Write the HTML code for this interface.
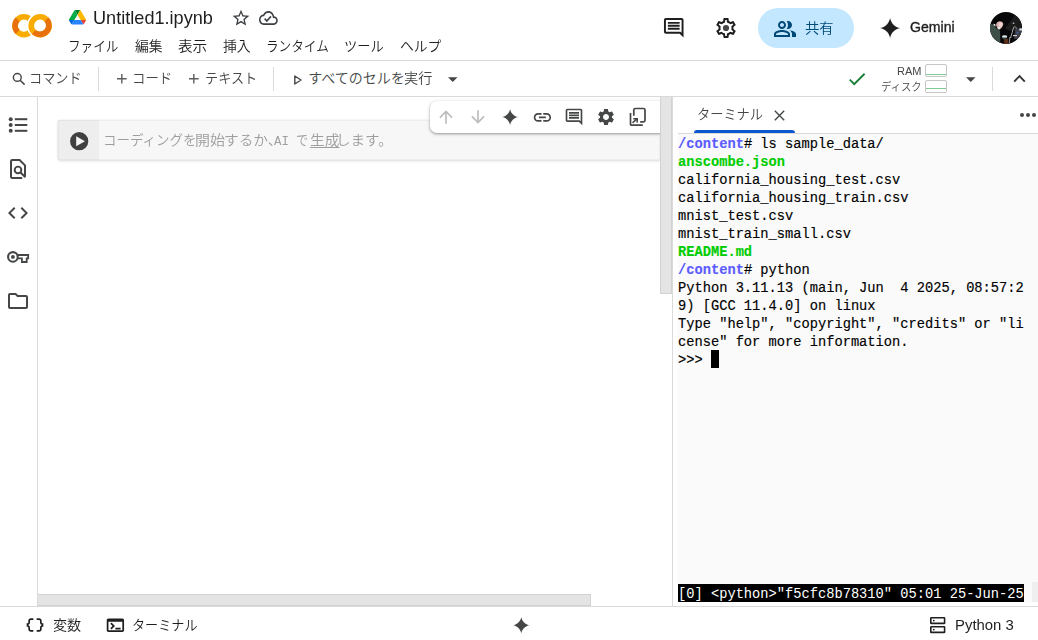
<!DOCTYPE html>
<html lang="ja">
<head>
<meta charset="utf-8">
<title>Untitled1.ipynb - Colab</title>
<style>
*{box-sizing:border-box;margin:0;padding:0}
html,body{width:1038px;height:640px;overflow:hidden;background:#fff}
body{font-family:"Liberation Sans","Noto Sans CJK JP",sans-serif;color:#1f1f1f;position:relative}
.abs{position:absolute}
.t{position:absolute;white-space:nowrap;line-height:1;transform-origin:0 0}
svg{position:absolute;display:block;overflow:visible}
#hdr{left:0;top:0;width:1038px;height:61px;border-bottom:1px solid #dadada;background:#fff}
#tb{left:0;top:61px;width:1038px;height:36px;border-bottom:1px solid #dadada;background:#fff}
.vsep{width:1px;background:#dadada}
#left{left:0;top:97px;width:38px;height:509px;border-right:1px solid #dadada;background:#fff}
#cell{left:58px;top:120px;width:602px;height:40px;background:#f7f7f7;border-radius:2px 0 0 2px;box-shadow:inset 0 0 0 1px rgba(0,0,0,.035),0 1px 3px rgba(0,0,0,.14),0 0 2px rgba(0,0,0,.06)}
#gutter{left:58px;top:120px;width:41px;height:40px;background:#eeeeee;border-radius:2px 0 0 2px;box-shadow:inset 1px 0 0 rgba(0,0,0,.035),inset 0 1px 0 rgba(0,0,0,.035),inset 0 -1px 0 rgba(0,0,0,.035)}
#ctb{left:430px;top:100.500px;width:230px;height:32.500px;background:#fff;border-radius:7px 0 0 7px;box-shadow:0 1px 2px rgba(60,64,67,.36),0 1px 3px 1px rgba(60,64,67,.15)}
#vthumb{left:660px;top:97px;width:12px;height:197px;background:#e4e4e4;border:1px solid #d2d2d2;border-top:none}
#hthumb{left:38px;top:594px;width:553px;height:12px;background:#e4e4e4;border:1px solid #d2d2d2;border-left:none}
#pborder{left:672px;top:97px;width:1px;height:509px;background:#dadada}
#tline{left:694px;top:130px;width:101px;height:3px;background:#0b57d0;border-radius:3px 3px 0 0}
#thdrb{left:678px;top:133px;width:360px;height:1px;background:#dadada}
#term{left:678px;top:134px;width:360px;height:468px;background:#fafafa}
.tl{position:absolute;left:678px;white-space:pre;font-family:"Liberation Mono",monospace;font-size:13.730px;line-height:18px;height:18px;color:#000;-webkit-text-stroke:.15px currentColor}
.blue{color:#5c5cff;font-weight:bold}
.grn{color:#00cd00;font-weight:bold}
#cursor{left:711px;top:350px;width:8px;height:18px;background:#000}
#tmux{left:678px;top:584px;width:346px;height:18px;background:#000}
#bot{left:0;top:606px;width:1038px;height:34px;border-top:1px solid #dadada;background:#fff}
</style>
</head>
<body>
<!-- HEADER -->
<div id="hdr" class="abs"></div>
<svg style="left:0;top:0" width="60" height="50" viewBox="0 0 60 50">
  <circle cx="23.95" cy="25.7" r="8.93" fill="none" stroke="#f9ab00" stroke-width="5.65"/>
  <path d="M17.64 19.39 A8.93 8.93 0 0 0 17.64 32.01" fill="none" stroke="#e8710a" stroke-width="5.65"/>
  <circle cx="40.15" cy="25.7" r="13.300" fill="#fff"/>
  <circle cx="40.15" cy="25.7" r="8.93" fill="none" stroke="#f9ab00" stroke-width="5.65"/>
  <path d="M46.46 19.39 A8.93 8.93 0 0 1 33.84 32.01" fill="none" stroke="#e8710a" stroke-width="5.65"/>
</svg>
<svg style="left:69.100px;top:10.400px" width="17" height="14.600" viewBox="0 0 87.3 78" preserveAspectRatio="none">
  <path d="m6.600 66.850 3.850 6.650c.8 1.400 1.950 2.500 3.300 3.300l13.750-23.800h-27.500c0 1.550.4 3.100 1.200 4.500z" fill="#0066da"/>
  <path d="m43.650 25-13.750-23.800c-1.350.8-2.500 1.900-3.300 3.300l-25.400 44a9.060 9.060 0 0 0 -1.200 4.500h27.500z" fill="#00ac47"/>
  <path d="m73.550 76.800c1.350-.8 2.500-1.900 3.300-3.300l1.600-2.750 7.650-13.250c.8-1.400 1.200-2.950 1.200-4.500h-27.502l5.852 11.500z" fill="#ea4335"/>
  <path d="m43.650 25 13.750-23.800c-1.350-.8-2.900-1.200-4.500-1.200h-18.500c-1.600 0-3.150.45-4.500 1.200z" fill="#00832d"/>
  <path d="m59.800 53h-32.300l-13.750 23.800c1.350.8 2.900 1.200 4.500 1.200h50.800c1.600 0 3.150-.45 4.500-1.200z" fill="#2684fc"/>
  <path d="m73.400 26.500-12.700-22c-.8-1.400-1.950-2.500-3.300-3.300l-13.750 23.800 16.150 28h27.450c0-1.550-.4-3.100-1.200-4.500z" fill="#ffba00"/>
</svg>
<svg id="star" style="left:230.800px;top:8.100px" width="20" height="20" viewBox="0 0 24 24"><path fill="#3c4043" d="M22 9.240l-7.190-.62L12 2 9.190 8.630 2 9.240l5.460 4.730L5.820 21 12 17.270 18.180 21l-1.630-7.030L22 9.240zM12 15.400l-3.760 2.270 1-4.280-3.320-2.880 4.380-.38L12 6.100l1.710 4.040 4.380.38-3.320 2.880 1 4.280L12 15.400z"/></svg>
<svg id="cloud" style="left:259px;top:10.900px" width="18.800" height="13.900" viewBox="0 4 24 16" preserveAspectRatio="none"><path fill="#3c4043" d="M19.350 10.040C18.670 6.590 15.640 4 12 4 9.110 4 6.600 5.640 5.350 8.040 2.340 8.360 0 10.910 0 14c0 3.310 2.690 6 6 6h13c2.760 0 5-2.240 5-5 0-2.640-2.050-4.780-4.650-4.960zM19 18H6c-2.210 0-4-1.790-4-4 0-2.050 1.530-3.760 3.560-3.970l1.070-.11.500-.95C8.080 7.140 9.940 6 12 6c2.620 0 4.880 1.860 5.390 4.430l.3 1.500 1.530.11c1.560.1 2.780 1.410 2.780 2.960 0 1.650-1.350 3-3 3zm-9-3.820l-2.090-2.090L6.500 13.500 10 17l6.010-6.010-1.410-1.410z"/></svg>
<!-- right header -->
<svg style="left:661.800px;top:16.200px" width="23.500" height="23.500" viewBox="0 0 24 24"><path fill="#1f1f1f" d="M21.990 4c0-1.100-.89-2-1.990-2H4c-1.100 0-2 .9-2 2v12c0 1.100.9 2 2 2h14l4 4-.01-18zM20 4v13.170L18.830 16H4V4h16zM6 12h12v2H6zm0-3h12v2H6zm0-3h12v2H6z"/></svg>
<svg style="left:714px;top:16px" width="24" height="24" viewBox="0 0 24 24"><path fill="#1f1f1f" d="M19.430 12.980c.04-.32.070-.64.070-.98 0-.34-.03-.66-.07-.98l2.110-1.650c.19-.15.240-.42.120-.64l-2-3.460c-.09-.16-.26-.25-.44-.25-.06 0-.12.010-.17.030l-2.490 1c-.52-.4-1.080-.73-1.690-.98l-.38-2.650C14.460 2.180 14.250 2 14 2h-4c-.25 0-.46.180-.49.420l-.38 2.650c-.61.250-1.170.59-1.690.98l-2.490-1c-.06-.02-.12-.03-.18-.03-.17 0-.34.090-.43.250l-2 3.460c-.13.220-.07.490.12.640l2.110 1.650c-.04.320-.07.650-.07.980 0 .33.030.66.070.98l-2.110 1.650c-.19.150-.24.420-.12.640l2 3.460c.09.160.26.250.44.250.06 0 .12-.1.170-.03l2.490-1c.52.400 1.080.73 1.690.98l.38 2.650c.03.240.24.420.49.420h4c.25 0 .46-.18.490-.42l.38-2.650c.61-.25 1.170-.59 1.690-.98l2.490 1c.06.020.12.030.18.030.17 0 .34-.09.43-.25l2-3.460c.12-.22.070-.49-.12-.64l-2.110-1.650zm-1.980-1.710c.04.310.05.520.05.730 0 .21-.02.430-.05.730l-.14 1.130.89.700 1.080.84-.7 1.210-1.270-.51-1.040-.42-.9.680c-.43.320-.84.560-1.250.73l-1.060.43-.16 1.130-.2 1.350h-1.400l-.19-1.350-.16-1.130-1.060-.43c-.43-.18-.83-.41-1.230-.71l-.91-.7-1.060.43-1.270.51-.7-1.210 1.080-.84.890-.7-.14-1.130c-.03-.31-.05-.54-.05-.74s.02-.43.050-.73l.14-1.130-.89-.7-1.080-.84.700-1.210 1.270.51 1.040.42.900-.68c.43-.32.840-.56 1.250-.73l1.060-.43.160-1.130.2-1.350h1.390l.19 1.350.16 1.130 1.060.43c.43.180.83.410 1.230.71l.91.700 1.060-.43 1.270-.51.700 1.210-1.070.85-.89.700.14 1.130z"/><circle cx="12" cy="12" r="3.100" fill="#444746"/></svg>
<div class="abs" style="left:758px;top:8px;width:96px;height:40px;border-radius:20px;background:#c2e7ff"></div>
<svg style="left:773.400px;top:16.500px" width="24" height="24" viewBox="0 0 24 24"><path fill="#004a77" d="M16.670 13.130C18.040 14.060 19 15.320 19 17v3h4v-3c0-2.180-3.570-3.470-6.330-3.870zM15 12c2.210 0 4-1.790 4-4s-1.790-4-4-4c-.47 0-.91.100-1.330.24C14.500 5.270 15 6.580 15 8s-.5 2.730-1.330 3.760c.42.140.86.240 1.330.24zM9 12c2.210 0 4-1.790 4-4s-1.790-4-4-4-4 1.790-4 4 1.790 4 4 4zm0-6c1.100 0 2 .9 2 2s-.9 2-2 2-2-.9-2-2 .9-2 2-2zm0 7c-2.670 0-8 1.340-8 4v3h16v-3c0-2.660-5.330-4-8-4zm6 5H3v-.99C3.200 16.290 6.300 15 9 15s5.800 1.290 6 2v1z"/></svg>
<svg style="left:879.700px;top:18.100px" width="20.200" height="20.200" viewBox="0 0 24 24"><path fill="#1f1f1f" d="M12 0 C12.840 6 18 11.160 24 12 C18 12.840 12.840 18 12 24 C11.160 18 6 12.840 0 12 C6 11.160 11.160 6 12 0Z"/></svg>
<!-- avatar -->
<svg style="left:990px;top:12px" width="32" height="32" viewBox="0 0 32 32">
  <defs><clipPath id="av"><circle cx="16" cy="16" r="16"/></clipPath><filter id="avb" x="-10%" y="-10%" width="120%" height="120%"><feGaussianBlur stdDeviation="0.600"/></filter></defs>
  <g clip-path="url(#av)">
    <rect width="32" height="32" fill="#08080a"/>
    <g filter="url(#avb)">
      <path d="M15 16.500 L25 3 L33 8 L33 16 L20 19 Z" fill="#1b1b1d"/>
      <path d="M-1 11.800 L3.600 12.600 L6.400 16.600 L10.100 18.800 L10.300 33 L-1 33 Z" fill="#3e5046"/>
      <path d="M6 13 Q6.500 9.500 10 9.200 Q13.400 9.600 13.200 12.500 Q12.600 15.500 10.500 17 L7.500 16.500 Z" fill="#d9b3ae"/>
      <ellipse cx="10.600" cy="12.800" rx="1.900" ry="2.300" fill="#f0d6d2"/>
      <path d="M3.300 11.800 L5.300 12.200 L5.600 14.500 L4 13.500 Z" fill="#f2f2f2"/>
      <path d="M7.300 15.200 L10.100 15 L10 17.400 L8 17.300 Z" fill="#e6e6e6"/>
      <path d="M3 10.800 Q5 6 10 6.600 Q14 7.500 13.700 10.500 Q10.500 8.300 7 9.500 Q5.500 10.500 5.300 12 Z" fill="#060606"/>
      <rect x="22.700" y="10.600" width="1.600" height="1.400" fill="#bdb5c8"/>
      <path d="M24.400 14.300 Q22.800 17 22.200 20.500 L20.500 26" stroke="#bdbdbd" stroke-width="0.900" fill="none"/>
      <path d="M25.600 14.600 L27.800 20.500" stroke="#a8a8a8" stroke-width="0.900" fill="none"/>
      <path d="M25 17 L32 16 L32 27 L24 27 Z" fill="#3c3e44"/>
      <rect x="26.600" y="19.800" width="1.800" height="1.700" fill="#3f63b5"/>
      <rect x="29.400" y="16.400" width="2.600" height="2.200" fill="#dfe6ee"/>
      <rect x="23" y="23" width="4" height="1.200" fill="#c9c9c9"/>
      <ellipse cx="14.600" cy="24.700" rx="2.600" ry="1.400" fill="#e4e7e8"/>
      <ellipse cx="14.600" cy="26.400" rx="2.200" ry="0.900" fill="#27403f"/>
      <path d="M13.800 27 L18.200 26.700 L18.500 32 L14.500 32 Z" fill="#5a2e12"/>
      <path d="M19.800 25 L19.400 31" stroke="#c8c8c8" stroke-width="0.700" fill="none"/>
    </g>
  </g>
</svg>

<!-- TOOLBAR -->
<div id="tb" class="abs"></div>
<svg style="left:10px;top:70px" width="17" height="17" viewBox="0 0 17 17"><circle cx="7.300" cy="7.400" r="3.900" fill="none" stroke="#444746" stroke-width="1.450"/><path d="M10.100 10.200 L14.600 14.600" stroke="#444746" stroke-width="1.550"/></svg>
<div class="abs vsep" style="left:98px;top:67px;height:24px"></div>
<svg style="left:116.900px;top:74.100px" width="9.600" height="9.600" viewBox="0 0 10 10"><path d="M5 0 V10 M0 5 H10" stroke="#5a5d5c" stroke-width="1.450"/></svg>
<svg style="left:188.700px;top:74.100px" width="9.600" height="9.600" viewBox="0 0 10 10"><path d="M5 0 V10 M0 5 H10" stroke="#5a5d5c" stroke-width="1.450"/></svg>
<div class="abs vsep" style="left:273px;top:67px;height:24px"></div>
<svg style="left:292.500px;top:73.500px" width="10" height="12" viewBox="0 0 10 12"><path d="M1.800 2 L8 6 L1.800 10 Z" fill="none" stroke="#444746" stroke-width="1.400" stroke-linejoin="round"/></svg>
<svg style="left:448px;top:77px" width="9.500" height="5" viewBox="0 0 10 5"><path d="M0 0 L10 0 L5 5 Z" fill="#444746"/></svg>
<svg style="left:846.100px;top:68px" width="22" height="22" viewBox="0 0 24 24"><path fill="#188038" d="M9 16.170L4.830 12l-1.420 1.410L9 19 21 7l-1.410-1.410z"/></svg>
<div class="abs" style="left:925px;top:64px;width:22px;height:12.500px;border:1px solid #c4c7c5;border-radius:2px"></div>
<div class="abs" style="left:926px;top:74px;width:20px;height:1px;background:#81c995"></div>
<div class="abs" style="left:925px;top:80px;width:22px;height:12.500px;border:1px solid #c4c7c5;border-radius:2px"></div>
<div class="abs" style="left:926px;top:87.500px;width:20px;height:1px;background:#81c995"></div>
<svg style="left:965.500px;top:77px" width="9.500" height="5" viewBox="0 0 10 5"><path d="M0 0 L10 0 L5 5 Z" fill="#444746"/></svg>
<div class="abs vsep" style="left:992px;top:67px;height:24px"></div>
<svg style="left:1013px;top:74px" width="13" height="9" viewBox="0 0 13 9"><path d="M1.200 7.600 L6.500 2.200 L11.800 7.600" fill="none" stroke="#333" stroke-width="1.900"/></svg>

<!-- LEFT RAIL -->
<div id="left" class="abs"></div>
<svg style="left:0;top:97px" width="38" height="230" viewBox="0 97 38 230">
  <g fill="#444746">
    <circle cx="10.700" cy="119.200" r="2"/><circle cx="10.700" cy="125" r="2"/><circle cx="10.700" cy="130.800" r="2"/>
    <rect x="14.800" y="118.200" width="12.500" height="2"/><rect x="14.800" y="124" width="12.500" height="2"/><rect x="14.800" y="129.800" width="12.500" height="2"/>
  </g>
</svg>
<svg style="left:6.100px;top:157.100px" width="24" height="24" viewBox="0 0 24 24">
  <path d="M5 4.200 Q5 3 6.200 3 H13.600 L19 8.400 V19.600" fill="none" stroke="#444746" stroke-width="2"/>
  <path d="M5 4 V19.800 Q5 21 6.200 21 H16.200" fill="none" stroke="#444746" stroke-width="2"/>
  <circle cx="12" cy="12.900" r="3.300" fill="none" stroke="#444746" stroke-width="1.900"/>
  <path d="M14.300 15.200 L19.400 20.300" stroke="#444746" stroke-width="2"/>
</svg>
<svg style="left:6px;top:201.200px" width="24" height="24" viewBox="0 0 24 24"><path fill="#444746" d="M9.400 16.600L4.800 12l4.600-4.600L8 6l-6 6 6 6 1.400-1.400zm5.200 0l4.600-4.600-4.600-4.600L16 6l6 6-6 6-1.400-1.400z"/></svg>
<svg style="left:7px;top:251px" width="23" height="12" viewBox="0 0 23 12">
  <circle cx="5.900" cy="5.900" r="4.800" fill="none" stroke="#444746" stroke-width="2.100"/>
  <circle cx="5.900" cy="5.900" r="1.900" fill="#444746"/>
  <path d="M10.600 4 H21.200 V7.300 H19.700 V11 H14.900 V7.300 H10.900" fill="none" stroke="#444746" stroke-width="1.800"/>
</svg>
<svg style="left:6.100px;top:289.200px" width="24" height="24" viewBox="0 0 24 24"><path fill="#444746" d="M9.170 6l2 2H20v10H4V6h5.170M10 4H4c-1.100 0-1.990.9-1.990 2L2 18c0 1.100.9 2 2 2h16c1.100 0 2-.9 2-2V8c0-1.100-.9-2-2-2h-8l-2-2z"/></svg>

<!-- MAIN -->
<div id="cell" class="abs"></div>
<div id="gutter" class="abs"></div>
<svg style="left:69.800px;top:131.600px" width="18.400" height="18.400" viewBox="0 0 24 24"><circle cx="12" cy="12" r="12.300" fill="#f7f7f7"/><circle cx="12" cy="12" r="11.900" fill="#404040"/><path d="M8.100 5.400 L19.500 12 L8.100 18.600 Z" fill="#f4f4f4"/></svg>
<div id="ctb" class="abs"></div>
<!-- cell toolbar icons -->
<svg style="left:436px;top:107.300px" width="20" height="20" viewBox="0 0 24 24"><path fill="#bdbdbd" d="M4 12l1.410 1.410L11 7.830V20h2V7.830l5.580 5.590L20 12l-8-8-8 8z"/></svg>
<svg style="left:468px;top:106.700px" width="20" height="20" viewBox="0 0 24 24"><path fill="#bdbdbd" d="M20 12l-1.410-1.410L13 16.170V4h-2v12.170l-5.580-5.590L4 12l8 8 8-8z"/></svg>
<svg style="left:502px;top:108.900px" width="16.200" height="16.200" viewBox="0 0 24 24"><path fill="#444746" d="M12 0 C12.840 6 18 11.160 24 12 C18 12.840 12.840 18 12 24 C11.160 18 6 12.840 0 12 C6 11.160 11.160 6 12 0Z"/></svg>
<svg style="left:531.700px;top:106.800px" width="20.800" height="20.800" viewBox="0 0 24 24"><path fill="#444746" d="M3.900 12c0-1.710 1.390-3.100 3.100-3.100h4V7H7c-2.760 0-5 2.240-5 5s2.240 5 5 5h4v-1.900H7c-1.710 0-3.100-1.390-3.100-3.100zM8 13h8v-2H8v2zm9-6h-4v1.900h4c1.710 0 3.100 1.390 3.100 3.100s-1.390 3.100-3.100 3.100h-4V17h4c2.760 0 5-2.240 5-5s-2.240-5-5-5z"/></svg>
<svg style="left:564px;top:107px" width="20" height="20" viewBox="0 0 24 24"><path fill="#444746" d="M21.990 4c0-1.100-.89-2-1.990-2H4c-1.100 0-2 .9-2 2v12c0 1.100.9 2 2 2h14l4 4-.01-18zM20 4v13.170L18.830 16H4V4h16zM6 12h12v2H6zm0-3h12v2H6zm0-3h12v2H6z"/></svg>
<svg style="left:596px;top:107px" width="20" height="20" viewBox="0 0 24 24"><path fill="#444746" d="M19.140 12.940c.04-.3.060-.61.060-.94 0-.32-.02-.64-.07-.94l2.030-1.580c.18-.14.230-.41.120-.61l-1.920-3.320c-.12-.22-.37-.29-.59-.22l-2.390.96c-.5-.38-1.030-.7-1.620-.94l-.36-2.540c-.04-.24-.24-.41-.48-.41h-3.840c-.24 0-.43.170-.47.410l-.36 2.540c-.59.240-1.130.57-1.620.94l-2.390-.96c-.22-.08-.47 0-.59.220L2.740 8.870c-.12.210-.08.470.12.610l2.030 1.580c-.05.300-.09.630-.09.940s.02.640.07.940l-2.030 1.580c-.18.140-.23.410-.12.610l1.920 3.320c.12.220.37.290.59.220l2.390-.96c.5.380 1.030.7 1.620.94l.36 2.540c.05.240.24.410.48.410h3.840c.24 0 .44-.17.470-.41l.36-2.540c.59-.24 1.130-.56 1.620-.94l2.390.96c.22.080.47 0 .59-.22l1.920-3.320c.12-.22.070-.47-.12-.61l-2.010-1.580zM12 15.600c-1.980 0-3.600-1.620-3.600-3.600s1.620-3.600 3.600-3.600 3.600 1.620 3.600 3.600-1.620 3.600-3.600 3.600z"/></svg>
<svg style="left:629px;top:107px" width="18" height="20" viewBox="0 0 18 20">
  <path d="M4.800 8.700 V3 Q4.800 1.500 6.300 1.500 H14.500 Q16 1.500 16 3 V13.300 Q16 14.800 14.500 14.800 H11.200" fill="none" stroke="#444746" stroke-width="1.700"/>
  <path d="M1.500 6 V17.200 Q1.500 18.200 2.500 18.200 H13.800" fill="none" stroke="#444746" stroke-width="1.700"/>
  <path d="M3.600 15.900 L7.700 11.900" fill="none" stroke="#444746" stroke-width="1.500"/>
  <path d="M4.300 10.900 H9 V15.500 H7.400 V12.500 H4.300 Z" fill="#444746"/>
</svg>
<div id="vthumb" class="abs"></div>
<div id="hthumb" class="abs"></div>

<!-- TERMINAL -->
<div id="pborder" class="abs"></div>
<svg style="left:774px;top:110px" width="11" height="11" viewBox="0 0 11 11"><path d="M0.800 0.800 L10.200 10.200 M10.200 0.800 L0.800 10.200" stroke="#444746" stroke-width="1.400"/></svg>
<div id="tline" class="abs"></div>
<div id="thdrb" class="abs"></div>
<svg style="left:1018px;top:111px" width="20" height="8" viewBox="0 0 20 8"><circle cx="4" cy="4" r="2" fill="#444746"/><circle cx="10" cy="4" r="2" fill="#444746"/><circle cx="16" cy="4" r="2" fill="#444746"/></svg>
<div id="term" class="abs"></div>
<div class="abs" style="left:1032px;top:582px;width:6px;height:20px;background:#efefef"></div>
<div class="tl" style="top:136px"><span class="blue">/content</span># ls sample_data/</div>
<div class="tl" style="top:154px"><span class="grn">anscombe.json</span></div>
<div class="tl" style="top:172px">california_housing_test.csv</div>
<div class="tl" style="top:190px">california_housing_train.csv</div>
<div class="tl" style="top:208px">mnist_test.csv</div>
<div class="tl" style="top:226px">mnist_train_small.csv</div>
<div class="tl" style="top:244px"><span class="grn">README.md</span></div>
<div class="tl" style="top:262px"><span class="blue">/content</span># python</div>
<div class="tl" style="top:280px">Python 3.11.13 (main, Jun  4 2025, 08:57:2</div>
<div class="tl" style="top:298px">9) [GCC 11.4.0] on linux</div>
<div class="tl" style="top:316px">Type "help", "copyright", "credits" or "li</div>
<div class="tl" style="top:334px">cense" for more information.</div>
<div class="tl" style="top:352px">&gt;&gt;&gt; </div>
<div id="cursor" class="abs"></div>
<div id="tmux" class="abs"></div>
<div class="tl" style="top:586px;color:#fff;-webkit-text-stroke:0">[0] &lt;python&gt;"f5cfc8b78310" 05:01 25-Jun-25</div>

<!-- BOTTOM -->
<div id="bot" class="abs"></div>
<svg style="left:25px;top:615px" width="20" height="20" viewBox="0 0 24 24"><path fill="#1f1f1f" d="M4 7v2c0 .55-.45 1-1 1H2v4h1c.55 0 1 .45 1 1v2c0 1.650 1.350 3 3 3h3v-2H7c-.55 0-1-.45-1-1v-2c0-1.300-.84-2.420-2-2.830v-.34C5.160 11.420 6 10.300 6 9V7c0-.55.45-1 1-1h3V4H7C5.350 4 4 5.350 4 7zM21 10c-.55 0-1-.45-1-1V7c0-1.650-1.350-3-3-3h-3v2h3c.55 0 1 .45 1 1v2c0 1.300.84 2.420 2 2.830v.34c-1.160.41-2 1.520-2 2.830v2c0 .55-.45 1-1 1h-3v2h3c1.650 0 3-1.350 3-3v-2c0-.55.45-1 1-1h1v-4h-1z"/></svg>
<svg style="left:104.600px;top:614.600px" width="20.800" height="20.300" viewBox="0 0 24 24" preserveAspectRatio="none"><path fill="#1f1f1f" d="M20 4H4c-1.100 0-2 .9-2 2v12c0 1.100.9 2 2 2h16c1.100 0 2-.9 2-2V6c0-1.100-.9-2-2-2zm0 14H4V8h16v10zm-2-1h-6v-2h6v2zM7.500 17l-1.410-1.410L8.670 13l-2.590-2.590L7.500 9l4 4-4 4z"/></svg>
<svg style="left:513.100px;top:616.700px" width="16.600" height="16.600" viewBox="0 0 24 24"><path fill="#444746" d="M12 0 C12.840 6 18 11.160 24 12 C18 12.840 12.840 18 12 24 C11.160 18 6 12.840 0 12 C6 11.160 11.160 6 12 0Z"/></svg>
<svg style="left:930px;top:617.300px" width="15.400" height="16.200" viewBox="0 0 15.400 16.200">
  <rect x="0.800" y="0.800" width="13.800" height="5.600" rx="0.500" fill="none" stroke="#1f1f1f" stroke-width="1.600"/>
  <rect x="0.800" y="9.800" width="13.800" height="5.600" rx="0.500" fill="none" stroke="#1f1f1f" stroke-width="1.600"/>
  <circle cx="3.800" cy="3.600" r="0.900" fill="#1f1f1f"/><circle cx="3.800" cy="12.600" r="0.900" fill="#1f1f1f"/>
</svg>
<div class="t" style="left:92.73px;top:9.75px;font-size:17.800px;color:#1f1f1f;transform:scaleX(1.0194);">Untitled1.ipynb</div>
<div class="t" style="left:68.20px;top:39.00px;font-size:14px;color:#1f1f1f;font-weight:350;transform:scaleX(0.8977);">ファイル</div>
<div class="t" style="left:134.55px;top:39.00px;font-size:14px;color:#1f1f1f;font-weight:350;transform:scaleX(0.9872);">編集</div>
<div class="t" style="left:177.98px;top:39.00px;font-size:14px;color:#1f1f1f;font-weight:350;transform:scaleX(1.0430);">表示</div>
<div class="t" style="left:222.55px;top:39.00px;font-size:14px;color:#1f1f1f;font-weight:350;transform:scaleX(0.9908);">挿入</div>
<div class="t" style="left:265.90px;top:39.00px;font-size:14px;color:#1f1f1f;font-weight:350;transform:scaleX(0.9004);">ランタイム</div>
<div class="t" style="left:344.28px;top:39.00px;font-size:14px;color:#1f1f1f;font-weight:350;transform:scaleX(0.9459);">ツール</div>
<div class="t" style="left:400.02px;top:39.00px;font-size:14px;color:#1f1f1f;font-weight:350;transform:scaleX(0.9840);">ヘルプ</div>
<div class="t" style="left:29.29px;top:71.05px;font-size:14px;color:#444746;font-weight:350;transform:scaleX(0.9391);">コマンド</div>
<div class="t" style="left:132.14px;top:71.05px;font-size:14px;color:#444746;font-weight:350;transform:scaleX(0.9589);">コード</div>
<div class="t" style="left:204.83px;top:71.05px;font-size:14px;color:#444746;font-weight:350;transform:scaleX(0.9397);">テキスト</div>
<div class="t" style="left:308.25px;top:71.05px;font-size:14px;color:#444746;font-weight:350;">すべてのセルを</div>
<div class="t" style="left:404.04px;top:71.05px;font-size:14px;color:#444746;font-weight:350;transform:scaleX(1.0093);">実行</div>
<div class="t" style="left:805.29px;top:21.30px;font-size:14px;color:#004a77;font-weight:350;transform:scaleX(1.0206);">共有</div>
<div class="t" style="left:909.60px;top:19.60px;font-size:14px;color:#1f1f1f;-webkit-text-stroke:.35px #1f1f1f;transform:scaleX(1.0058);">Gemini</div>
<div class="t" style="left:896.91px;top:65.93px;font-size:10.500px;color:#444746;transform:scaleX(1.0483);">RAM</div>
<div class="t" style="left:881.19px;top:81.93px;font-size:11px;color:#444746;font-weight:350;transform:scaleX(0.9415);">ディスク</div>
<div class="t" style="left:103.03px;top:132.90px;font-size:14px;color:#9e9e9e;font-weight:350;transform:scaleX(0.9634);">コーディングを</div>
<div class="t" style="left:194.86px;top:132.90px;font-size:14px;color:#9e9e9e;font-weight:350;transform:scaleX(1.0705);">開始</div>
<div class="t" style="left:223.79px;top:132.90px;font-size:14px;color:#9e9e9e;font-weight:350;transform:scaleX(1.0489);">するか、</div>
<div class="t" style="left:274.30px;top:134.85px;font-size:13px;color:#9e9e9e;font-family:'Liberation Mono','Noto Sans CJK JP',monospace;transform:scaleX(0.9544);">AI</div>
<div class="t" style="left:296.33px;top:132.90px;font-size:14px;color:#9e9e9e;font-weight:350;transform:scaleX(0.8596);">で</div>
<div class="t" style="left:309.61px;top:132.90px;font-size:14px;color:#9e9e9e;font-weight:350;transform:scaleX(1.0467);"><span style="text-decoration:underline;text-underline-offset:2px">生成</span></div>
<div class="t" style="left:335.92px;top:132.90px;font-size:14px;color:#9e9e9e;font-weight:350;transform:scaleX(1.0391);">します。</div>
<div class="t" style="left:696.79px;top:107.12px;font-size:14px;color:#444746;font-weight:350;transform:scaleX(0.9432);">ターミナル</div>
<div class="t" style="left:52.65px;top:618.25px;font-size:14px;color:#1f1f1f;font-weight:350;transform:scaleX(1.0056);">変数</div>
<div class="t" style="left:132.13px;top:618.25px;font-size:14px;color:#1f1f1f;font-weight:350;transform:scaleX(0.9353);">ターミナル</div>
<div class="t" style="left:955.44px;top:617.67px;font-size:14px;color:#1f1f1f;transform:scaleX(1.0642);">Python 3</div>
</body>
</html>
